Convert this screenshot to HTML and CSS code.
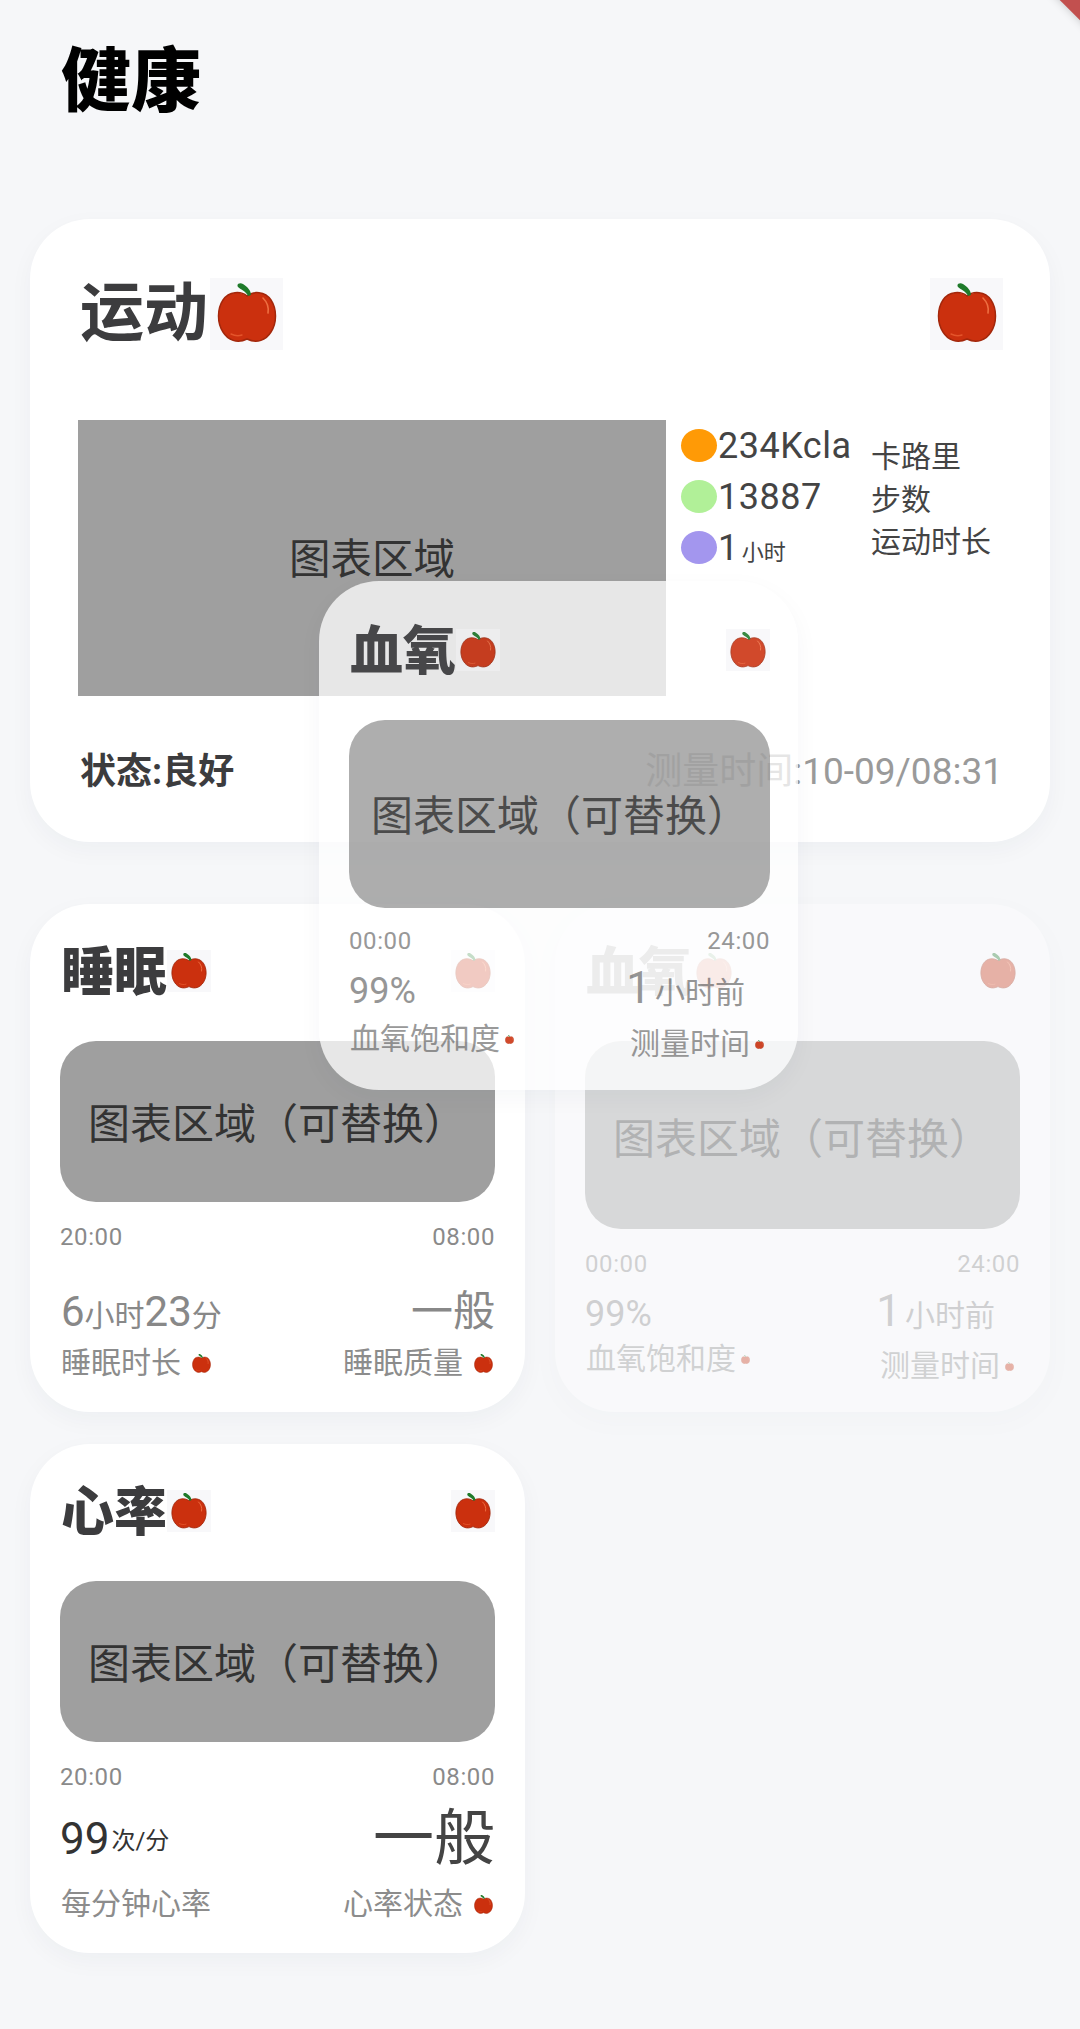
FILE: index.html
```html
<!DOCTYPE html>
<html lang="zh">
<head>
<meta charset="utf-8">
<title>健康</title>
<link rel="stylesheet" href="styles.css">
</head>
<body>
<svg class="defs" width="0" height="0" aria-hidden="true">
  <symbol id="apple" viewBox="0 0 60 60">
    <path d="M30 13C24 8 12 8 6 17C0 26 0 40 6 49C11 57 20 61 30 56C40 61 49 57 54 49C60 40 60 26 54 17C48 8 36 8 30 13Z" fill="#cb300e" stroke="#a3270b" stroke-width="1.5"/>
    <path d="M46 15C50 19 52 24 51 30" fill="none" stroke="#ee6f42" stroke-width="1.6" stroke-linecap="round"/>
    <path d="M14 51C18 53 22 53 25 52" fill="none" stroke="#e4552b" stroke-width="1.4" stroke-linecap="round"/>
    <path d="M31 13C29 8 24 7 21 4C19 1 23 -1 26 1C31 4 34 8 34 12Z" fill="#1f7a2a"/>
  </symbol>
</svg>
<div class="banner"></div>
<main class="page">
  <h1 class="title">健康</h1>

  <section class="card card-wide">
    <header class="wide-head">
      <div class="heading">
        <h2 class="wide-name">运动</h2>
        <span class="apple-box apple-box-lg"><svg class="apple-lg"><use href="#apple"/></svg></span>
      </div>
      <span class="apple-box apple-box-lg"><svg class="apple-lg"><use href="#apple"/></svg></span>
    </header>
    <div class="wide-body">
      <div class="wide-chart">图表区域</div>
      <div class="legend">
        <div class="legend-values">
          <div class="legend-row"><i class="dot dot-orange"></i><span class="legend-num">234Kcla</span></div>
          <div class="legend-row"><i class="dot dot-green"></i><span class="legend-num">13887</span></div>
          <div class="legend-row"><i class="dot dot-purple"></i><span class="legend-num">1<small class="legend-unit">小时</small></span></div>
        </div>
        <div class="legend-labels">
          <div>卡路里</div>
          <div>步数</div>
          <div>运动时长</div>
        </div>
      </div>
    </div>
    <footer class="wide-foot">
      <strong class="state">状态:良好</strong>
      <span class="measured">测量时间:10-09/08:31</span>
    </footer>
  </section>

  <div class="grid">
    <section class="card">
      <header class="head">
        <div class="heading">
          <h2 class="name">睡眠</h2>
          <span class="apple-box"><svg class="apple-md"><use href="#apple"/></svg></span>
        </div>
        <span class="apple-box"><svg class="apple-md"><use href="#apple"/></svg></span>
      </header>
      <div class="chart">图表区域（可替换）</div>
      <div class="times"><span>20:00</span><span>08:00</span></div>
      <div class="stats stats-sleep">
        <div class="stat">
          <div class="value">6<small>小时</small>23<small>分</small></div>
          <div class="label">睡眠时长<svg class="apple-sm gap"><use href="#apple"/></svg></div>
        </div>
        <div class="stat stat-right">
          <div class="value">一般</div>
          <div class="label">睡眠质量<svg class="apple-sm gap"><use href="#apple"/></svg></div>
        </div>
      </div>
    </section>

    <section class="card ghost">
      <header class="head">
        <div class="heading">
          <h2 class="name">血氧</h2>
          <span class="apple-box"><svg class="apple-md"><use href="#apple"/></svg></span>
        </div>
        <span class="apple-box"><svg class="apple-md"><use href="#apple"/></svg></span>
      </header>
      <div class="chart chart-tall">图表区域（可替换）</div>
      <div class="times"><span>00:00</span><span>24:00</span></div>
      <div class="stats stats-oxygen">
        <div class="stat">
          <div class="value">99%</div>
          <div class="label">血氧饱和度<svg class="apple-xs"><use href="#apple"/></svg></div>
        </div>
        <div class="stat stat-right stat-low">
          <div class="value value-ago">1<small>小时前</small></div>
          <div class="label">测量时间<svg class="apple-xs"><use href="#apple"/></svg></div>
        </div>
      </div>
    </section>

    <section class="card card-heart">
      <header class="head">
        <div class="heading">
          <h2 class="name">心率</h2>
          <span class="apple-box"><svg class="apple-md"><use href="#apple"/></svg></span>
        </div>
        <span class="apple-box"><svg class="apple-md"><use href="#apple"/></svg></span>
      </header>
      <div class="chart">图表区域（可替换）</div>
      <div class="times"><span>20:00</span><span>08:00</span></div>
      <div class="stats stats-heart">
        <div class="stat">
          <div class="value value-dark">99<small class="raised">次/分</small></div>
          <div class="label">每分钟心率</div>
        </div>
        <div class="stat stat-right">
          <div class="value value-huge">一般</div>
          <div class="label">心率状态<svg class="apple-sm gap"><use href="#apple"/></svg></div>
        </div>
      </div>
    </section>
  </div>

  <section class="card floating">
    <header class="head">
      <div class="heading">
        <h2 class="name">血氧</h2>
        <span class="apple-box"><svg class="apple-md"><use href="#apple"/></svg></span>
      </div>
      <span class="apple-box"><svg class="apple-md"><use href="#apple"/></svg></span>
    </header>
    <div class="chart chart-tall">图表区域（可替换）</div>
    <div class="times"><span>00:00</span><span>24:00</span></div>
    <div class="stats stats-float">
      <div class="stat">
        <div class="value">99%</div>
        <div class="label">血氧饱和度<svg class="apple-xs"><use href="#apple"/></svg></div>
      </div>
      <div class="stat stat-right stat-low">
        <div class="value value-ago">1<small>小时前</small></div>
        <div class="label">测量时间<svg class="apple-xs"><use href="#apple"/></svg></div>
      </div>
    </div>
  </section>
</main>
</body>
</html>
```
FILE: styles.css
```css
* { box-sizing: border-box; }
html, body { margin: 0; padding: 0; }
body {
  position: relative;
  width: 1080px;
  height: 2029px;
  overflow: hidden;
  background: #f6f7f9;
  color: #3c3c3e;
  font-family: Roboto, "Noto Sans CJK SC", sans-serif;
}
.defs { position: absolute; }
.banner {
  position: absolute;
  left: 1044px;
  top: -24px;
  width: 80px;
  height: 40px;
  background: #c2504f;
  box-shadow: 0 0 10px rgba(0, 0, 0, 0.2);
  transform: rotate(45deg);
}
.page { padding: 42px 30px 0; }
.title {
  margin: 0 0 97px 31px;
  font-size: 70px;
  line-height: 80px;
  font-weight: 900;
  color: #000;
}
h2 { margin: 0; }
.card {
  background: #fff;
  border-radius: 60px;
  box-shadow: 0 8px 24px rgba(30, 40, 70, 0.04);
  padding: 41px 30px 0;
}
.card-wide {
  height: 623px;
  margin-bottom: 62px;
  padding: 59px 47px 0 48px;
}
.wide-head, .head, .heading, .wide-foot, .times, .stats { display: flex; }
.wide-head, .head, .wide-foot, .times, .stats { justify-content: space-between; }
.wide-head, .head, .heading, .wide-foot { align-items: center; }
.wide-head { height: 72px; }
.wide-name {
  margin-left: 2px;
  font-size: 64px;
  line-height: 72px;
  font-weight: 700;
}
.apple-box {
  display: flex;
  align-items: center;
  justify-content: center;
  width: 44px;
  height: 42px;
  background: #f8f8fa;
}
.apple-box-lg { width: 73px; height: 72px; margin-left: 2px; }
.apple-lg { width: 60px; height: 60px; margin-bottom: 2px; }
.apple-md { width: 36px; height: 36px; }
.apple-sm { width: 19px; height: 19px; }
.apple-xs { width: 9px; height: 9px; margin-left: 5px; }
.gap { margin-left: 11px; }
.wide-body { display: flex; margin-top: 70px; }
.wide-chart {
  display: flex;
  align-items: center;
  justify-content: center;
  width: 588px;
  height: 276px;
  padding-bottom: 4px;
  background: #9f9f9f;
  color: #333;
  font-size: 41.5px;
}
.legend { display: flex; margin-left: 15px; }
.legend-values { width: 190px; }
.legend-row {
  display: flex;
  align-items: center;
  height: 51px;
  font-size: 36px;
  color: #444;
}
.legend-num { letter-spacing: 0.5px; }
.dot {
  flex: none;
  width: 36px;
  height: 33px;
  margin-right: 1px;
  border-radius: 50%;
}
.dot-orange { background: #ff9a06; }
.dot-green { background: #b1f098; }
.dot-purple { background: #a396ee; }
.legend-unit { margin-left: 3px; font-size: 22px; letter-spacing: 0; }
.legend-labels {
  padding-top: 16px;
  font-size: 30px;
  line-height: 42.5px;
  color: #444;
}
.wide-foot {
  height: 44px;
  margin-top: 50px;
  padding-left: 2px;
}
.state { font-size: 36px; font-weight: 700; }
.measured { font-size: 37px; color: #9a9a9a; }
.grid {
  display: grid;
  grid-template-columns: 495px 495px;
  gap: 32px 30px;
}
.grid .card { height: 508px; }
.grid .card-heart { height: 509px; }
.head { height: 52px; }
.name {
  margin: 4px 0 0 1px;
  font-size: 53px;
  line-height: 52px;
  font-weight: 900;
}
.chart {
  height: 161px;
  margin-top: 44px;
  padding: 0 0 3px 28px;
  display: flex;
  align-items: center;
  background: #9f9f9f;
  border-radius: 36px;
  color: #333;
  font-size: 42px;
}
.chart-tall { height: 188px; }
.times {
  height: 28px;
  margin-top: 21px;
  padding: 0;
  font-size: 24px;
  line-height: 28px;
  letter-spacing: 0.6px;
  color: #8a8a8a;
}
.stat { display: flex; flex-direction: column; }
.stat-right { align-items: flex-end; }
.value {
  height: 50px;
  font-size: 42px;
  line-height: 50px;
  color: #888;
  padding-left: 1px;
}
.value small { font-size: 30px; }
.label {
  display: flex;
  align-items: center;
  height: 36px;
  margin-top: 8px;
  padding-left: 1px;
  font-size: 30px;
  line-height: 36px;
  color: #8c8c8c;
}
.stat-right .label { padding-right: 2px; }
.stats-sleep { margin-top: 36px; }
.stats-heart { margin-top: 23px; }
.stats-heart .label { margin-top: 22px; }
.value-dark { color: #333; font-size: 44px; padding: 0; }
.raised { position: relative; top: -5px; font-size: 24px !important; margin-left: 2px; }
.value-huge { font-size: 61px; color: #444; padding: 0; }
.stats-oxygen { margin-top: 11px; }
.stats-oxygen .value, .stats-float .value { font-size: 36px; padding: 0; }
.stats-oxygen .value-ago, .stats-float .value-ago { font-size: 44px; line-height: 44px; padding-right: 25px; }
.value-ago small { margin-left: 4px; }
.stats-oxygen .stat-right .label, .stats-float .stat-right .label { padding-right: 6px; }
.stats-oxygen .label { margin-top: 2px; }
.stats-oxygen .stat-low .label { margin-top: 9px; }
.ghost { opacity: 0.35; }
.ghost .apple-box { background: transparent; }
.ghost .chart { padding-bottom: 0; }
.floating {
  position: absolute;
  left: 319px;
  top: 581px;
  width: 479px;
  height: 509px;
  padding: 43px 28px 0 30px;
  background: rgba(255, 255, 255, 0.85);
  opacity: 0.88;
}
.floating .chart { padding-left: 22px; background: #a3a3a3; }
.floating .times { margin-top: 19px; }
.stats-float { margin-top: 11px; }
.stats-float .label { margin-top: 5px; }
.stats-float .stat-low .label { margin-top: 10px; }
```
